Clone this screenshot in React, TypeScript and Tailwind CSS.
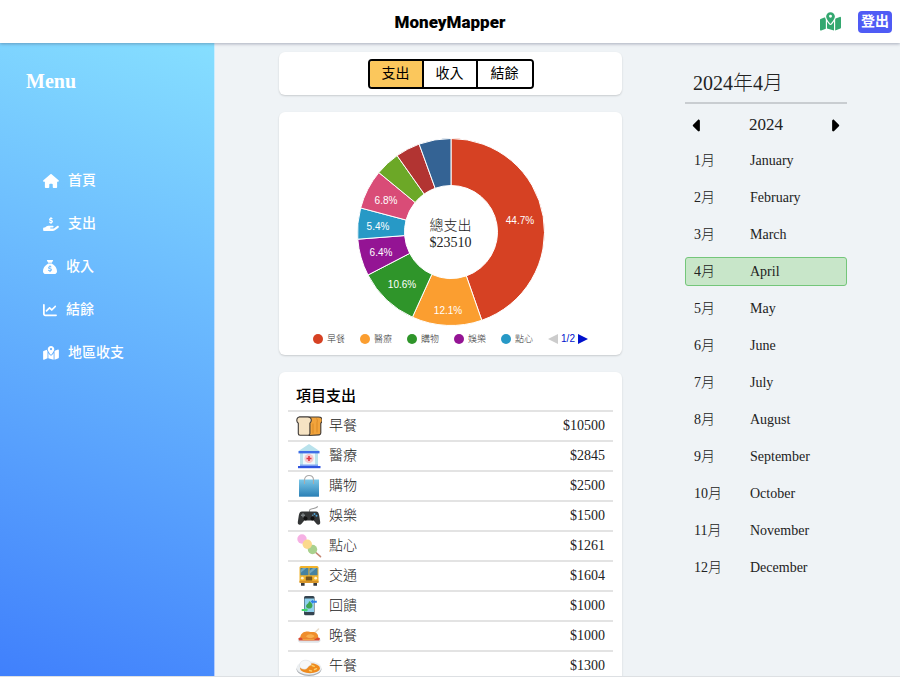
import type { ReactNode } from "react";
import {
  FaCaretLeft,
  FaCaretRight,
  FaChartLine,
  FaHandHoldingDollar,
  FaHouse,
  FaMapLocationDot,
  FaSackDollar,
} from "react-icons/fa6";

const menu = [
  { label: "首頁", Icon: FaHouse, width: "w-4" },
  { label: "支出", Icon: FaHandHoldingDollar, width: "w-4" },
  { label: "收入", Icon: FaSackDollar, width: "w-[14px]" },
  { label: "結餘", Icon: FaChartLine, width: "w-[14px]" },
  { label: "地區收支", Icon: FaMapLocationDot, width: "w-4" },
];

const tabs = ["支出", "收入", "結餘"];

const months = [
  "January",
  "February",
  "March",
  "April",
  "May",
  "June",
  "July",
  "August",
  "September",
  "October",
  "November",
  "December",
];

function Bread() {
  return (
    <>
      <path d="M4 4h18.500c2.300 0 3.700 1.400 3.700 3.400 0 1.500-.8 2.300-1.400 2.800V20c0 1-.7 1.600-1.600 1.900L13 22.500 9 10z" fill="#f2a43c" stroke="#3f3a36" strokeWidth="1.100" />
      <path d="M3.700 4h8c2.200 0 3.600 1.400 3.600 3.300 0 1.500-.7 2.300-1.400 2.900v10.300c0 1.100-.6 1.700-1.700 1.700H4c-1.100 0-1.700-.6-1.700-1.700V10.200C1.500 9.600.8 8.800.8 7.400.8 5.400 2 4 3.700 4z" fill="#f6e3c3" stroke="#3f3a36" strokeWidth="1.100" />
      <path d="M17 10.500v10M20.500 5.500c1 1 1 2.500.5 4v10" stroke="#d98a26" strokeWidth="1" fill="none" />
    </>
  );
}

function Hospital() {
  return (
    <>
      <path d="M13 1 2.500 8h21z" fill="#b9e2ec" />
      <path d="M4 10h18v13H4z" fill="#eef8fb" />
      <path d="M4 10h3v12H4zM19 10h3v12h-3z" fill="#b9e2ec" />
      <path d="M2.500 8h21v2.400h-21z" fill="#3f6ee6" />
      <path d="M4 21.500h18v1.500H4z" fill="#7fa4f2" />
      <path d="M2 23h22.500v2.200H2z" fill="#2f55e0" />
      <circle cx="13" cy="15.500" r="4.600" fill="#f7c9cd" />
      <path d="M12.200 13h1.600v1.700h1.700v1.600h-1.700V18h-1.600v-1.700h-1.700v-1.600h1.700z" fill="#dc3545" />
    </>
  );
}

function Bag() {
  return (
    <>
      <defs>
        <linearGradient id="bag" x1="0" y1="0" x2="0" y2="1">
          <stop offset="0" stopColor="#7cc8e8" />
          <stop offset="1" stopColor="#2a7fb5" />
        </linearGradient>
      </defs>
      <path d="M3 6.500h20v17.200H3z" fill="url(#bag)" />
      <path d="M8.500 11V7c0-6 9-6 9 0v4" fill="none" stroke="#a9a9a9" strokeWidth="1.100" />
    </>
  );
}

function Gamepad() {
  return (
    <>
      <path d="M13.500 9V7.200c0-1.500 2-1.300 4-1.700s3-.8 4.300-2" fill="none" stroke="#9b9b9b" strokeWidth="1.100" />
      <path d="M6 8.500h14c2 0 2.700 1.300 3.200 4l1 6.500c.4 3-2.500 3.500-4 1.500l-2.500-3H8.300l-2.500 3c-1.500 2-4.400 1.500-4-1.500l1-6.500c.5-2.700 1.200-4 3.200-4z" fill="#333536" />
      <circle cx="9.500" cy="15.500" r="2" fill="#111" />
      <circle cx="16.500" cy="15.500" r="2" fill="#111" />
      <path d="M6.300 10.200h1.400v1.300H9v1.400H7.700v1.300H6.300v-1.300H5v-1.400h1.300z" fill="#7d8385" />
      <circle cx="18.500" cy="11" r="1" fill="#4ba3d9" />
      <circle cx="20.500" cy="12.700" r="1" fill="#4ba3d9" />
      <circle cx="16.700" cy="12.300" r=".8" fill="#5b8fae" />
    </>
  );
}

function Dango() {
  return (
    <>
      <path d="m18 18 6.500 5.700" stroke="#c48672" strokeWidth="1.600" strokeLinecap="round" />
      <circle cx="6" cy="6" r="4.700" fill="#f6b1e4" />
      <circle cx="16.500" cy="16.500" r="4.700" fill="#a9d18e" />
      <circle cx="11.300" cy="11.200" r="4.700" fill="#fbd98d" />
    </>
  );
}

function Bus() {
  return (
    <>
      <path d="M5 19h3.600v3.700H5zM17.400 19H21v3.700h-3.600z" fill="#37393b" />
      <rect x="3.500" y="3" width="19" height="17" rx="1.500" fill="#f2b32c" />
      <path d="M4.500 5h8v7.300h-8zM13.500 5h8v7.300h-8z" fill="#46829f" />
      <path d="m4.500 10 6-5H7L4.500 7zM13.500 11l7-6H17l-3.500 3z" fill="#6fa6bf" />
      <rect x="3.500" y="17.800" width="19" height="2" fill="#d3912a" />
      <circle cx="6.300" cy="15.200" r="1.400" fill="#fff2c9" />
      <circle cx="19.700" cy="15.200" r="1.400" fill="#fff2c9" />
      <rect x="9.800" y="13.500" width="6.400" height="4" rx=".6" fill="#77561d" />
    </>
  );
}

function Phone() {
  return (
    <>
      <rect x="8" y="3" width="10.500" height="19.300" rx="1.500" fill="#35444f" />
      <path d="M8.500 5.500H18V19H8.500z" fill="#8fd0ee" />
      <path d="M13 8c3 2 4.300 4 3 6.300-1 1.700-4.700 1.700-5.700 0-.8-1.700.4-2.800 1.400-3.500.8-.7 1.300-1.500 1.300-2.800z" fill="#3fa652" />
      <path d="M14.500 8.500 17 6.700v1h3.800v2H17v1z" fill="#2f7fe8" />
      <path d="M5.700 16h4v-1l2.500 2-2.500 2v-1h-4z" fill="#42d56b" />
    </>
  );
}

function Turkey() {
  return (
    <>
      <path d="M1.700 16.500h23c0 2-1.300 3.200-3 3.200H5c-2 0-3.300-1.200-3.300-3.200z" fill="#dfe4e8" />
      <path d="M19 9.500 22.500 6" stroke="#e8dccb" strokeWidth="1.600" strokeLinecap="round" />
      <path d="M4.500 16.500c-1-4 1.500-7.300 5-7.800 3-.4 4.500.6 7 .3 3-.4 6 2 5.700 5-.1 1.500-1 2.500-2 2.500z" fill="#ef8e2c" />
      <path d="M10 13.500c2-3 6-3 8.500-.5-1.500 2.500-5.500 3-8.500.5z" fill="#f9b050" />
      <path d="M2.300 15.500c1-1.300 3-1.300 4 .3H20c1-1.600 3-1.600 4-.3l-.7 2H3z" fill="#d94a32" />
      <path d="M6.500 16.500h12" stroke="#f1a340" strokeWidth="1.500" />
    </>
  );
}

function Curry() {
  return (
    <>
      <ellipse cx="13" cy="16.300" rx="12.400" ry="6.700" fill="#a9adb2" />
      <ellipse cx="13" cy="15" rx="12.400" ry="6.700" fill="#eceff1" />
      <ellipse cx="14" cy="15.200" rx="10" ry="5" fill="#ef8a1d" />
      <path d="M3.500 13c0-3.500 2.500-5.800 6-5.800s6 1.800 5.700 4.300c-.8 1.500-1.700.8-2.700 2s-1.500 2.700-4 2.700-5-1.200-5-3.200z" fill="#f7f8f8" stroke="#d5d9dc" strokeWidth=".5" />
      <path d="m16 12.500 2.300.8M18.500 16.500l2-.8M13.500 17.500l2 .5" stroke="#fbd06a" strokeWidth="1.400" strokeLinecap="round" />
    </>
  );
}

type Expense = {
  name: string;
  amount: number;
  color: string;
  icon: ReactNode;
  label?: { text: string; x: number; y: number };
};

const expenses: Expense[] = [
  { name: "早餐", amount: 10500, color: "#d64123", icon: <Bread />, label: { text: "44.7%", x: 69, y: -12 } },
  { name: "醫療", amount: 2845, color: "#fb9e30", icon: <Hospital />, label: { text: "12.1%", x: -3, y: 78 } },
  { name: "購物", amount: 2500, color: "#2f952a", icon: <Bag />, label: { text: "10.6%", x: -49, y: 52 } },
  { name: "娛樂", amount: 1500, color: "#941494", icon: <Gamepad />, label: { text: "6.4%", x: -70, y: 20 } },
  { name: "點心", amount: 1261, color: "#2799c6", icon: <Dango />, label: { text: "5.4%", x: -73, y: -6 } },
  { name: "交通", amount: 1604, color: "#d94c77", icon: <Bus />, label: { text: "6.8%", x: -65, y: -32 } },
  { name: "回饋", amount: 1000, color: "#6ca827", icon: <Phone /> },
  { name: "晚餐", amount: 1000, color: "#b23432", icon: <Turkey /> },
  { name: "午餐", amount: 1300, color: "#346394", icon: <Curry /> },
];

const total = expenses.reduce((sum, e) => sum + e.amount, 0);

function slicePath(start: number, end: number, outer: number, inner: number) {
  const at = (r: number, t: number) => {
    const a = t * 2 * Math.PI;
    return `${(r * Math.sin(a)).toFixed(2)} ${(-r * Math.cos(a)).toFixed(2)}`;
  };
  const large = end - start > 0.5 ? 1 : 0;
  return `M${at(outer, start)}A${outer} ${outer} 0 ${large} 1 ${at(outer, end)}L${at(inner, end)}A${inner} ${inner} 0 ${large} 0 ${at(inner, start)}Z`;
}

function Donut() {
  let run = 0;
  const slices = expenses.map((e) => {
    const start = run / total;
    run += e.amount;
    return { ...e, d: slicePath(start, run / total, 93.5, 46.5) };
  });
  return (
    <div className="grid place-items-center">
      <svg viewBox="-94 -94 188 188" className="col-start-1 row-start-1 size-[188px]" role="img" aria-label="支出比例">
        {slices.map((s) => (
          <path key={s.name} d={s.d} fill={s.color} stroke="#fff" strokeWidth="1" />
        ))}
        {slices.map(
          (s) =>
            s.label && (
              <text
                key={s.name}
                x={s.label.x}
                y={s.label.y + 4}
                textAnchor="middle"
                fill="#fff"
                className="font-['Liberation_Sans',sans-serif] text-[10px]"
              >
                {s.label.text}
              </text>
            ),
        )}
      </svg>
      <p className="col-start-1 row-start-1 pt-1 text-center text-[14px] leading-[17px]">
        總支出
        <br />${total}
      </p>
    </div>
  );
}

function Legend() {
  return (
    <div className="flex items-center justify-center text-[9px] leading-[12px] text-[#333]">
      <ul className="flex">
        {expenses.slice(0, 5).map((e) => (
          <li key={e.name} className="flex w-[47px] items-center gap-1">
            <svg viewBox="0 0 10 10" className="size-[10px]" aria-hidden="true">
              <circle cx="5" cy="5" r="5" fill={e.color} />
            </svg>
            {e.name}
          </li>
        ))}
      </ul>
      <div className="flex items-center gap-[3px] font-['Liberation_Sans',sans-serif] text-[10px] text-[#0011cc]">
        <button type="button" aria-label="上一頁" disabled>
          <svg viewBox="0 0 10 10" className="size-[10px]">
            <path d="M10 0v10L0 5z" fill="#ccc" />
          </svg>
        </button>
        <span>1/2</span>
        <button type="button" aria-label="下一頁">
          <svg viewBox="0 0 10 10" className="size-[10px]">
            <path d="M0 0v10l10-5z" fill="#0011cc" />
          </svg>
        </button>
      </div>
    </div>
  );
}

const card = "rounded-md bg-white shadow-[0_1px_2px_rgba(0,0,0,0.16)]";

export default function App() {
  return (
    <div className="flex h-screen flex-col overflow-hidden border-b border-[#dde0e3] bg-[#eff3f6] font-['Liberation_Serif','Noto_Sans_CJK_TC',serif] font-light text-[#222]">
      <header className="z-10 grid h-[43px] shrink-0 grid-cols-[1fr_auto_1fr] items-center bg-white px-2 shadow-[0_1px_3px_rgba(60,70,100,0.4)]">
        <h1 className="col-start-2 font-['Roboto','Noto_Sans',sans-serif] text-[17px] font-black leading-6 text-black">
          MoneyMapper
        </h1>
        <div className="flex items-center justify-end gap-[17px]">
          <a href="#map" aria-label="地圖" className="text-[#34a870]">
            <FaMapLocationDot className="h-[19px] w-[21px]" />
          </a>
          <button type="button" className="h-[22px] rounded bg-[#4f5bf5] px-[3px] text-[14px] font-bold leading-[22px] text-white">
            登出
          </button>
        </div>
      </header>

      <div className="flex min-h-0 flex-1">
        <nav className="w-[215px] shrink-0 border-r border-white/60 bg-[linear-gradient(20deg,#4080fc,#86dfff)] pt-6 text-white">
          <h2 className="pl-[26px] text-[20px] font-bold leading-7">Menu</h2>
          <ul className="mt-[76px] flex flex-col gap-[23px] pl-[43px]">
            {menu.map(({ label, Icon, width }) => (
              <li key={label}>
                <a href={`#${label}`} className="flex h-5 items-center gap-[9px] text-[14px] font-medium leading-5">
                  <Icon className={`h-[14px] ${width}`} />
                  {label}
                </a>
              </li>
            ))}
          </ul>
        </nav>

        <div className="flex min-w-0 flex-1 gap-[63px] pl-16 pr-[53px]">
          <main className="flex min-w-0 flex-1 flex-col gap-[17px] pt-[9px]">
            <div className={`${card} flex h-[43px] shrink-0 items-center justify-center`}>
              <div className="flex divide-x-2 divide-black overflow-hidden rounded border-2 border-black">
                {tabs.map((t, i) => (
                  <button
                    key={t}
                    type="button"
                    aria-pressed={i === 0}
                    className={`h-[26px] w-[54px] text-[14px] font-normal leading-[26px] text-black ${i === 0 ? "bg-[#fbc75c]" : "bg-white"}`}
                  >
                    {t}
                  </button>
                ))}
              </div>
            </div>

            <section className={`${card} flex shrink-0 flex-col gap-[7px] pt-[26px] pb-[10px]`}>
              <Donut />
              <Legend />
            </section>

            <section className={`${card} shrink-0 px-[9px] pt-[11px] pb-4`}>
              <h2 className="border-b-2 border-[#e3e3e3] px-2 pb-px text-[15px] font-medium leading-[26px] text-black">
                項目支出
              </h2>
              <ul>
                {expenses.map((e) => (
                  <li key={e.name} className="flex h-[30px] items-center gap-[7px] border-b-2 border-[#e3e3e3] px-2 text-[14px] leading-5">
                    <svg viewBox="0 0 26 26" className="size-[26px]" fill="none" aria-hidden="true">
                      {e.icon}
                    </svg>
                    <span className="flex-1">{e.name}</span>
                    <span>${e.amount}</span>
                  </li>
                ))}
              </ul>
            </section>
          </main>

          <aside className="w-[162px] shrink-0 pt-[26px]">
            <h2 className="border-b-2 border-[#c9cdd1] px-2 pb-[5px] text-[20px] leading-7">2024年4月</h2>
            <div className="flex h-[42px] items-center justify-between px-[3px]">
              <button type="button" aria-label="上一年" className="text-black">
                <FaCaretLeft className="size-[19px]" />
              </button>
              <span className="text-[17px] leading-6">2024</span>
              <button type="button" aria-label="下一年" className="text-black">
                <FaCaretRight className="size-[19px]" />
              </button>
            </div>
            <ul className="flex flex-col gap-2">
              {months.map((m, i) => (
                <li key={m}>
                  <button
                    type="button"
                    aria-pressed={i === 3}
                    className={`flex h-[29px] w-full items-center rounded-[3px] border px-2 text-left text-[14px] leading-5 ${
                      i === 3 ? "border-[#74c67a] bg-[#c8e6c9]" : "border-transparent"
                    }`}
                  >
                    <span className="w-14">{i + 1}月</span>
                    <span>{m}</span>
                  </button>
                </li>
              ))}
            </ul>
          </aside>
        </div>
      </div>
    </div>
  );
}
